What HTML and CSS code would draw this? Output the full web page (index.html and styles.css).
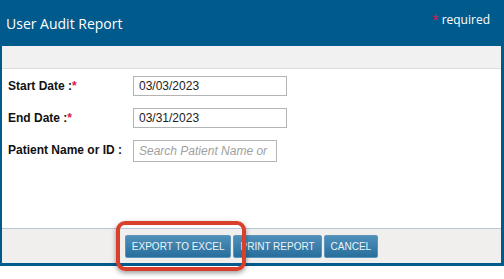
FILE: index.html
```html
<!DOCTYPE html>
<html lang="en">
<head>
<meta charset="UTF-8">
<title>User Audit Report</title>
<link rel="stylesheet" href="styles.css">
</head>
<body>
<div class="dialog">
    <div class="dialog-header">
        <h2 class="dialog-title">User Audit Report</h2>
        <span class="required-note"><span class="star">*</span> required</span>
    </div>
    <div class="toolbar"></div>
    <form class="dialog-body" action="#" onsubmit="return false">
        <label class="field-label" for="startDate">Start Date :<span class="star">*</span></label>
        <input class="field-input" type="text" id="startDate" value="03/03/2023">
        <label class="field-label" for="endDate">End Date :<span class="star">*</span></label>
        <input class="field-input" type="text" id="endDate" value="03/31/2023">
        <label class="field-label" for="patient">Patient Name or ID :</label>
        <input class="field-input search" type="text" id="patient" placeholder="Search Patient Name or ID">
    </form>
    <div class="dialog-footer">
        <button class="btn" type="button">Export to Excel</button>
        <button class="btn" type="button">Print Report</button>
        <button class="btn" type="button">Cancel</button>
    </div>
</div>
<div class="highlight"></div>
</body>
</html>
```
FILE: styles.css
```css
body {
    margin: 0;
    padding: 0;
    background-color: #fff;
    font-family: 'Liberation Sans', Arial, sans-serif;
    color: #222;
}
.dialog {
    width: 499px;
    border-left: 2px solid #015a8c;
    border-right: 3px solid #015a8c;
    border-bottom: 3px solid #015a8c;
}
.dialog-header {
    height: 46px;
    background-color: #015a8c;
    display: flex;
    justify-content: space-between;
    color: #fff;
}
.dialog-title {
    margin: 0;
    padding: 14px 0 0 4px;
    font-family: 'Open Sans', sans-serif;
    font-size: 14px;
    font-weight: normal;
    line-height: 20px;
}
.required-note {
    padding: 11px 11px 0 0;
    font-family: 'Open Sans', sans-serif;
    font-size: 12px;
    line-height: 18px;
}
.star {
    color: #e4134a;
}
.toolbar {
    height: 22px;
    background-color: #f1f1f1;
    border-bottom: 1px solid #dcdcdc;
}
.dialog-body {
    height: 152px;
    margin: 0;
    padding: 7px 0 0 6px;
    display: grid;
    grid-template-columns: 125px auto;
    grid-auto-rows: 20px;
    row-gap: 12px;
    align-items: center;
    justify-items: start;
}
.field-label {
    font-size: 12px;
    font-weight: bold;
    color: #111;
}
.field-input {
    box-sizing: border-box;
    width: 154px;
    height: 20px;
    padding: 0 5px;
    border: 1px solid #b4b4b4;
    font-family: 'Liberation Sans', Arial, sans-serif;
    font-size: 12px;
    color: #222;
    outline: none;
}
.field-input.search {
    width: 144px;
    height: 22px;
    align-self: start;
}
.field-input.search::placeholder {
    color: #a0a0a0;
    font-style: italic;
}
.dialog-footer {
    height: 34px;
    background-color: #f0efee;
    border-top: 1px solid #b7c7d5;
    display: flex;
    justify-content: center;
    align-items: flex-start;
    gap: 2px;
}
.btn {
    margin-top: 6px;
    height: 23px;
    padding: 0 6px;
    border: 1px solid #5d95bd;
    border-radius: 2px;
    background: linear-gradient(#4f8fba, #276f9d);
    color: #eef4f8;
    font-family: 'Liberation Sans', Arial, sans-serif;
    font-size: 10px;
    text-transform: uppercase;
    cursor: pointer;
}
.highlight {
    position: absolute;
    left: 116px;
    top: 221px;
    width: 122px;
    height: 42px;
    border: 4px solid #d9402c;
    border-radius: 9px;
    box-shadow: 0 2px 5px rgba(0,0,0,0.4);
}
```
